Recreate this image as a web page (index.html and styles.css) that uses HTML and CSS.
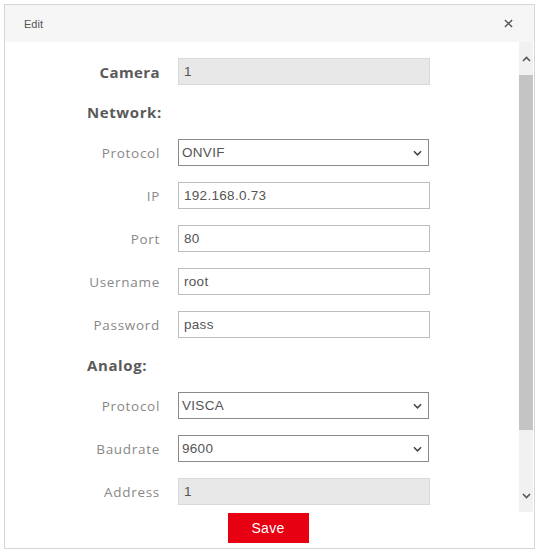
FILE: index.html
```html
<!DOCTYPE html>
<html>
<head>
<meta charset="utf-8">
<link rel="stylesheet" href="styles.css">
</head>
<body>
<div class="dialog">
  <div class="header">
    <span class="title">Edit</span>
    <svg class="close" width="9" height="9" viewBox="0 0 10 10"><path d="M1 1L9 9M9 1L1 9" stroke="#555" stroke-width="1.5"/></svg>
  </div>
  <div class="main">
    <div class="form">
      <div class="row">
        <label class="lbl strong">Camera</label>
        <div class="field disabled">1</div>
      </div>
      <div class="heading">Network:</div>
      <div class="row">
        <label class="lbl">Protocol</label>
        <div class="field select">ONVIF<svg class="chev" width="9" height="6" viewBox="0 0 10 6"><path d="M1 1L5 5L9 1" fill="none" stroke="#444" stroke-width="1.7"/></svg></div>
      </div>
      <div class="row">
        <label class="lbl">IP</label>
        <div class="field">192.168.0.73</div>
      </div>
      <div class="row">
        <label class="lbl">Port</label>
        <div class="field">80</div>
      </div>
      <div class="row">
        <label class="lbl">Username</label>
        <div class="field">root</div>
      </div>
      <div class="row">
        <label class="lbl">Password</label>
        <div class="field">pass</div>
      </div>
      <div class="heading">Analog:</div>
      <div class="row">
        <label class="lbl">Protocol</label>
        <div class="field select">VISCA<svg class="chev" width="9" height="6" viewBox="0 0 10 6"><path d="M1 1L5 5L9 1" fill="none" stroke="#444" stroke-width="1.7"/></svg></div>
      </div>
      <div class="row">
        <label class="lbl">Baudrate</label>
        <div class="field select">9600<svg class="chev" width="9" height="6" viewBox="0 0 10 6"><path d="M1 1L5 5L9 1" fill="none" stroke="#444" stroke-width="1.7"/></svg></div>
      </div>
      <div class="row">
        <label class="lbl">Address</label>
        <div class="field disabled">1</div>
      </div>
    </div>
    <div class="scrollbar">
      <div class="arrow"><svg width="9" height="6" viewBox="0 0 9 6"><path d="M1 5L4.5 1.5L8 5" fill="none" stroke="#555" stroke-width="1.6"/></svg></div>
      <div class="track"><div class="thumb"></div></div>
      <div class="arrow"><svg width="9" height="6" viewBox="0 0 9 6"><path d="M1 1L4.5 4.5L8 1" fill="none" stroke="#555" stroke-width="1.6"/></svg></div>
    </div>
  </div>
  <div class="footer">
    <button class="save">Save</button>
  </div>
</div>
</body>
</html>
```

FILE: styles.css
```css
html, body {
  margin: 0;
  padding: 0;
  background: #fff;
}
body {
  font-family: "Open Sans", "Liberation Sans", sans-serif;
}
.dialog {
  margin: 4px 0 0 4px;
  width: 529px;
  height: 543px;
  border: 1px solid #d6d6d6;
  display: flex;
  flex-direction: column;
  background: #fff;
}
.header {
  height: 37px;
  flex: none;
  background: #f6f6f6;
  display: flex;
  align-items: center;
  justify-content: space-between;
  padding: 0 21px 0 19px;
}
.title {
  font-family: "Liberation Sans", sans-serif;
  font-size: 11px;
  color: #555;
}
.close {
  display: block;
}
.main {
  height: 470px;
  flex: none;
  display: flex;
}
.form {
  flex: 1;
  padding: 16px 0 0 82px;
  display: flex;
  flex-direction: column;
  gap: 16px;
}
.row {
  display: flex;
  align-items: center;
  gap: 18px;
  height: 27px;
}
.lbl {
  width: 73px;
  text-align: right;
  font-size: 13.5px;
  letter-spacing: 0.7px;
  color: #888;
}
.lbl.strong {
  font-weight: 700;
  color: #5a5a5a;
  font-size: 15px;
  letter-spacing: 0.4px;
}
.heading {
  height: 22px;
  line-height: 22px;
  font-size: 15px;
  font-weight: 700;
  color: #5a5a5a;
  letter-spacing: 0.6px;
}
.field {
  box-sizing: border-box;
  width: 252px;
  height: 27px;
  border: 1px solid #bdbdbd;
  padding: 0 6px 0 5px;
  display: flex;
  align-items: center;
  font-family: "Liberation Sans", sans-serif;
  font-size: 13.5px;
  letter-spacing: 0.3px;
  color: #555;
}
.field.disabled {
  background: #e8e8e8;
  border-color: #d9d9d9;
}
.field.select {
  width: 251px;
  border-color: #8a8a8a;
  justify-content: space-between;
  padding-left: 3px;
}
.chev {
  display: block;
}
.scrollbar {
  width: 14px;
  flex: none;
  margin-right: 1px;
  background: #f1f1f1;
  display: flex;
  flex-direction: column;
}
.arrow {
  height: 33px;
  display: flex;
  align-items: center;
  justify-content: center;
}
.track {
  flex: 1;
}
.thumb {
  height: 355px;
  background: #c4c4c4;
}
.footer {
  flex: 1;
  display: flex;
  justify-content: center;
  align-items: flex-start;
  padding-top: 1px;
}
.save {
  width: 81px;
  height: 30px;
  margin-right: 3px;
  border: none;
  background: #e60012;
  color: #fff;
  font-family: "Liberation Sans", sans-serif;
  font-size: 14px;
  letter-spacing: 0.3px;
}
```
